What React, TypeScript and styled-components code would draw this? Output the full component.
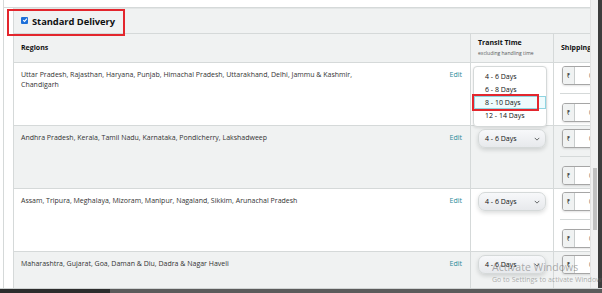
import React from "react";
import styled, { createGlobalStyle } from "styled-components";

const GlobalStyle = createGlobalStyle`
  html, body {
    margin: 0;
    padding: 0;
    background: #ffffff;
  }
  body {
    font-family: "Open Sans", "Noto Sans", sans-serif;
    color: #0f1111;
    overflow: hidden;
  }
`;

type Region = {
  states: string;
  shaded: boolean;
  open?: boolean;
};

const regions: Region[] = [
  {
    states:
      "Uttar Pradesh, Rajasthan, Haryana, Punjab, Himachal Pradesh, Uttarakhand, Delhi, Jammu & Kashmir, Chandigarh",
    shaded: false,
    open: true,
  },
  {
    states:
      "Andhra Pradesh, Kerala, Tamil Nadu, Karnataka, Pondicherry, Lakshadweep",
    shaded: true,
  },
  {
    states:
      "Assam, Tripura, Meghalaya, Mizoram, Manipur, Nagaland, Sikkim, Arunachal Pradesh",
    shaded: false,
  },
  {
    states: "Maharashtra, Gujarat, Goa, Daman & Diu, Dadra & Nagar Haveli",
    shaded: true,
  },
];

const transitOptions = ["4 - 6 Days", "6 - 8 Days", "8 - 10 Days", "12 - 14 Days"];

const App = () => {
  return (
    <>
      <GlobalStyle />
      <Screen>
        <Viewport>
          <Page>
            <TopCard />
            <Section>
              <SectionHeader>
                <Annotation />
                <CheckBox>
                  <svg width="6" height="6" viewBox="0 0 10 10">
                    <path
                      d="M2 5.2 L4.2 7.4 L8.2 2.8"
                      fill="none"
                      stroke="#fff"
                      strokeWidth="1.8"
                    />
                  </svg>
                </CheckBox>
                <Title>Standard Delivery</Title>
              </SectionHeader>

              <Row $head>
                <HeadCell>
                  <HeadLabel>Regions</HeadLabel>
                </HeadCell>
                <HeadCell $divided>
                  <div>
                    <HeadLabel>Transit Time</HeadLabel>
                    <SubLabel>excluding handling time</SubLabel>
                  </div>
                </HeadCell>
                <HeadCell $divided>
                  <HeadLabel>Shipping</HeadLabel>
                </HeadCell>
              </Row>

              {regions.map((r, i) => (
                <Row key={i} $shaded={r.shaded} $last={i === regions.length - 1}>
                  <RegionCell>
                    <States>{r.states}</States>
                    <EditLink>Edit</EditLink>
                  </RegionCell>
                  <TransitCell>
                    {r.open ? (
                      <OptionList>
                        {transitOptions.map((o) => (
                          <OptionItem key={o} $active={o === "8 - 10 Days"}>
                            {o}
                            {o === "8 - 10 Days" && <OptionMark />}
                          </OptionItem>
                        ))}
                      </OptionList>
                    ) : (
                      <Select>
                        <span>4 - 6 Days</span>
                        <svg width="6" height="4" viewBox="0 0 8 5">
                          <path
                            d="M1 1 L4 4 L7 1"
                            fill="none"
                            stroke="#565959"
                            strokeWidth="1.2"
                          />
                        </svg>
                      </Select>
                    )}
                  </TransitCell>
                  <ShippingCell>
                    <PriceInput>
                      <Currency>₹</Currency>
                      <Amount>0</Amount>
                    </PriceInput>
                    {i < regions.length - 1 && (
                      <>
                        <Divider />
                        <PriceInput>
                          <Currency>₹</Currency>
                          <Amount>0</Amount>
                        </PriceInput>
                      </>
                    )}
                  </ShippingCell>
                </Row>
              ))}
            </Section>
          </Page>
          <ScrollTrack>
            <ScrollThumb />
          </ScrollTrack>
          <Frame />
        </Viewport>
        <BottomBar>
          <BottomTab />
        </BottomBar>
        <Watermark>
          <WatermarkTitle>Activate Windows</WatermarkTitle>
          <WatermarkText>Go to Settings to activate Windows.</WatermarkText>
        </Watermark>
      </Screen>
    </>
  );
};

export default App;

const Screen = styled.div`
  position: relative;
  width: 602px;
  height: 293px;
  display: flex;
  flex-direction: column;
  overflow: hidden;
  background: #ffffff;
`;

const Viewport = styled.div`
  display: flex;
  height: 288px;
  min-height: 0;
`;

const Page = styled.div`
  width: 586px;
  margin-left: 3px;
  border-left: 1px solid #d5d9d9;
  overflow: hidden;
  display: flex;
  flex-direction: column;
`;

const TopCard = styled.div`
  flex: 0 0 auto;
  height: 7px;
  border-bottom: 1px solid #d5d9d9;
`;

const Section = styled.div`
  margin-left: 9px;
  width: 680px;
  border-left: 1px solid #d5d9d9;
  border-top: 1px solid #e3e6e6;
  background: #ffffff;
`;

const SectionHeader = styled.div`
  position: relative;
  height: 24px;
  background: #f0f2f2;
  border-bottom: 1px solid #d5d9d9;
  display: flex;
  align-items: center;
  gap: 4px;
  padding-left: 7px;
`;

const Annotation = styled.div`
  position: absolute;
  left: -7px;
  top: 0;
  width: 114px;
  height: 23px;
  border: 2px solid #e3262d;
  pointer-events: none;
`;

const CheckBox = styled.span`
  width: 7px;
  height: 7px;
  border-radius: 1px;
  background: #1c6fd9;
  display: flex;
  align-items: center;
  justify-content: center;
  margin-top: -2px;
`;

const Title = styled.span`
  font-size: 9.4px;
  font-weight: 700;
  color: #0f1111;
  letter-spacing: -0.05px;
`;

const Row = styled.div<{ $head?: boolean; $shaded?: boolean; $last?: boolean }>`
  display: grid;
  grid-template-columns: 456px 83px 1fr;
  height: ${(p) => (p.$head ? "28px" : "62px")};
  background: ${(p) => (p.$head || p.$shaded ? "#f0f2f2" : "#ffffff")};
  border-bottom: 1px solid #d5d9d9;
`;

const HeadCell = styled.div<{ $divided?: boolean }>`
  display: flex;
  align-items: center;
  padding-left: ${(p) => (p.$divided ? "7px" : "7px")};
  border-left: ${(p) => (p.$divided ? "1px solid #d5d9d9" : "none")};
`;

const HeadLabel = styled.div`
  font-size: 7px;
  font-weight: 700;
  color: #0f1111;
  line-height: 10px;
`;

const SubLabel = styled.div`
  font-size: 5px;
  color: #565959;
  line-height: 9px;
  margin-top: 1px;
`;

const RegionCell = styled.div`
  display: flex;
  align-items: flex-start;
  padding: 7px 8px 0 7px;
`;

const States = styled.div`
  flex: 0 1 368px;
  font-size: 7px;
  line-height: 10px;
  color: #333333;
`;

const EditLink = styled.a`
  margin-left: auto;
  font-size: 7px;
  line-height: 10px;
  color: #2a8b9a;
  cursor: pointer;
`;

const TransitCell = styled.div`
  border-left: 1px solid #d5d9d9;
  padding: 3px 0 0 7px;
`;

const OptionList = styled.div`
  margin-left: -5px;
  width: 72px;
  height: 56px;
  padding: 3px 0 0 0;
  background: #ffffff;
  border: 1px solid #d5d9d9;
  border-radius: 4px;
  box-shadow: 0 1px 3px rgba(15, 17, 17, 0.12);
`;

const OptionItem = styled.div<{ $active?: boolean }>`
  position: relative;
  height: 13px;
  line-height: 13px;
  padding-left: 11px;
  font-size: 7px;
  color: #0f1111;
  background: ${(p) => (p.$active ? "#eefbfd" : "transparent")};
  box-shadow: ${(p) => (p.$active ? "inset 0 0 0 1px #8fd4e1" : "none")};
`;

const OptionMark = styled.span`
  position: absolute;
  left: -2px;
  top: -2px;
  width: 63px;
  height: 13px;
  border: 2px solid #e3262d;
`;

const Select = styled.div`
  width: 68px;
  height: 19px;
  box-sizing: border-box;
  padding: 0 5px 0 6px;
  display: flex;
  align-items: center;
  justify-content: space-between;
  font-size: 7px;
  color: #0f1111;
  background: linear-gradient(#f7f8fa, #e7e9ec);
  border: 1px solid #d5d9d9;
  border-radius: 7px;
  box-shadow: 0 2px 4px rgba(15, 17, 17, 0.15);
`;

const ShippingCell = styled.div`
  border-left: 1px solid #d5d9d9;
  padding: 3px 0 0 8px;
  display: flex;
  flex-direction: column;
`;

const PriceInput = styled.div`
  width: 60px;
  height: 19px;
  box-sizing: border-box;
  display: flex;
  border: 1px solid #a6a6a6;
  border-radius: 3px;
  overflow: hidden;
  box-shadow: 0 1px 2px rgba(15, 17, 17, 0.12);
`;

const Currency = styled.span`
  width: 11px;
  display: flex;
  align-items: center;
  justify-content: center;
  font-size: 6px;
  color: #0f1111;
  background: #f0f2f2;
  border-right: 1px solid #c8cccc;
`;

const Amount = styled.span`
  flex: 1;
  background: #ffffff;
  padding-left: 14px;
  font-size: 7px;
  line-height: 17px;
  color: #565959;
`;

const Divider = styled.div`
  width: 40px;
  height: 1px;
  margin: 8px 0 9px -2px;
  background: #d5d9d9;
`;

const ScrollTrack = styled.div`
  position: relative;
  width: 7px;
  background: #f1f1f1;
  border-left: 1px solid #e3e3e3;
`;

const ScrollThumb = styled.div`
  position: absolute;
  left: 2px;
  top: 168px;
  width: 4px;
  height: 62px;
  background: #c1c1c1;
`;

const Frame = styled.div`
  flex: 1;
  background: #3d3d3d;
`;

const BottomBar = styled.div`
  flex: 1;
  background: #5b5b5b;
  border-top: 1px solid #cfd3d3;
`;

const BottomTab = styled.div`
  width: 110px;
  height: 100%;
  background: #2c2c2c;
`;

const Watermark = styled.div`
  position: absolute;
  left: 492px;
  top: 261px;
  pointer-events: none;
  white-space: nowrap;
  color: rgba(110, 110, 110, 0.55);
`;

const WatermarkTitle = styled.div`
  font-size: 10.5px;
  line-height: 13px;
`;

const WatermarkText = styled.div`
  font-size: 7px;
  line-height: 10px;
  margin-top: 1px;
`;
